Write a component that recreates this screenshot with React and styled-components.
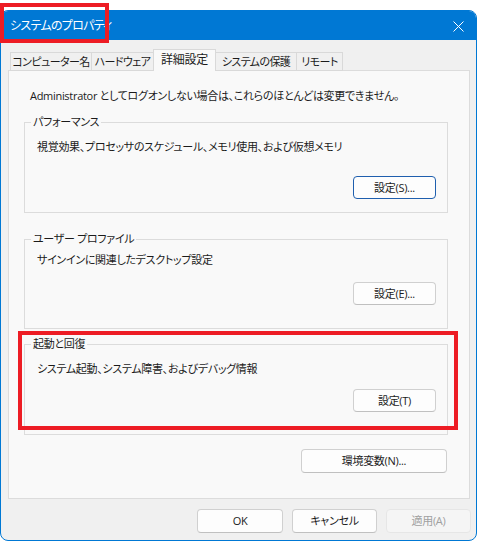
import styled, { createGlobalStyle } from "styled-components";

const GlobalStyle = createGlobalStyle`
  body {
    margin: 0;
    background: #ffffff;
    font-family: "Open Sans", "Noto Sans CJK JP", sans-serif;
    font-feature-settings: "palt";
    font-size: 11px;
    letter-spacing: -0.3px;
    line-height: 16px;
    color: #1b1b1b;
  }
  * { box-sizing: border-box; }
`;

const Page = styled.div`
  position: relative;
  width: 479px;
  height: 543px;
  padding-top: 10px;
`;

const Window = styled.div`
  width: 477px;
  height: 531px;
  border: 1px solid #0078d4;
  border-radius: 8px;
  background: #f0f0f0;
  overflow: hidden;
  display: flex;
  flex-direction: column;
`;

const TitleBar = styled.div`
  height: 29px;
  flex: none;
  background: #0078d4;
  color: #ffffff;
  font-size: 12px;
  letter-spacing: -0.7px;
  display: flex;
  align-items: center;
  justify-content: space-between;
  padding: 1px 12px 0 9px;
`;

const CloseIcon = () => (
  <svg width="11" height="11" viewBox="0 0 11 11">
    <path d="M0.5 0.5 L10.5 10.5 M10.5 0.5 L0.5 10.5" stroke="#ffffff" strokeWidth="1" fill="none" />
  </svg>
);

const TabStrip = styled.div`
  display: flex;
  align-items: flex-end;
  height: 22px;
  margin: 9px 0 -1px 9px;
  position: relative;
  z-index: 1;
`;

const Tab = styled.div`
  flex: none;
  width: ${(p) => p.$w}px;
  height: ${(p) => (p.$active ? 22 : 19)}px;
  margin-left: -1px;
  border: 1px solid #d9d9d9;
  border-bottom: ${(p) => (p.$active ? "none" : "1px solid #d9d9d9")};
  background: ${(p) => (p.$active ? "#f9f9f9" : "#f0f0f0")};
  position: relative;
  z-index: ${(p) => (p.$active ? 2 : 1)};
  display: flex;
  align-items: center;
  justify-content: center;
  padding-bottom: ${(p) => (p.$active ? 2 : 0)}px;
  font-size: ${(p) => (p.$active ? 12 : 11)}px;
  letter-spacing: ${(p) => (p.$active ? -0.3 : -0.6)}px;
  white-space: nowrap;
  &:first-child { margin-left: 0; }
`;

const Panel = styled.div`
  margin: 0 6px 0 7px;
  height: 429px;
  border: 1px solid #dcdcdc;
  background: #f9f9f9;
  padding: 17px 0 0 0;
  display: flex;
  flex-direction: column;
`;

const Intro = styled.div`
  padding-left: 21px;
  white-space: nowrap;
`;

const GroupBox = styled.fieldset`
  margin: ${(p) => p.$mt}px 21px 0 15px;
  padding: 0 11px ${(p) => p.$pb}px 12px;
  border: 1px solid #dcdcdc;
  min-width: 0;
  display: flex;
  flex-direction: column;
`;

const Legend = styled.legend`
  padding: 0 2px;
  margin-left: -6px;
  line-height: 16px;
`;

const Desc = styled.div`
  margin-top: ${(p) => p.$mt}px;
  white-space: nowrap;
`;

const Button = styled.button`
  font: inherit;
  letter-spacing: inherit;
  font-feature-settings: "palt";
  width: ${(p) => p.$w}px;
  height: ${(p) => p.$h || 23}px;
  margin-top: ${(p) => p.$mt || 0}px;
  align-self: flex-end;
  background: ${(p) => (p.disabled ? "#f5f5f5" : "#fdfdfd")};
  color: ${(p) => (p.disabled ? "#a0a0a0" : "#1b1b1b")};
  border: 1px solid ${(p) => (p.$focus ? "#1f5fae" : p.disabled ? "#e6e6e6" : "#d0d0d0")};
  border-bottom-color: ${(p) => (p.$focus ? "#1f5fae" : p.disabled ? "#e6e6e6" : "#c0c0c0")};
  border-radius: 4px;
  padding: 0;
  display: flex;
  align-items: center;
  justify-content: center;
`;

const EnvRow = styled.div`
  display: flex;
  justify-content: flex-end;
  margin: 14px 22px 0 0;
`;

const Footer = styled.div`
  display: flex;
  justify-content: flex-end;
  gap: 9px;
  margin: 10px 5px 0 0;
`;

const Highlight = styled.div`
  position: absolute;
  left: ${(p) => p.$x}px;
  top: ${(p) => p.$y}px;
  width: ${(p) => p.$w}px;
  height: ${(p) => p.$h}px;
  border: 4px solid #ed1c24;
  pointer-events: none;
`;

const tabs = [
  { label: "コンピューター名", w: 82 },
  { label: "ハードウェア", w: 63 },
  { label: "詳細設定", w: 63, active: true },
  { label: "システムの保護", w: 82 },
  { label: "リモート", w: 47 },
];

export default function App() {
  return (
    <Page>
      <GlobalStyle />
      <Window>
        <TitleBar>
          <span>システムのプロパティ</span>
          <CloseIcon />
        </TitleBar>
        <TabStrip>
          {tabs.map((t) => (
            <Tab key={t.label} $w={t.w} $active={t.active}>
              {t.label}
            </Tab>
          ))}
        </TabStrip>
        <Panel>
          <Intro>Administrator としてログオンしない場合は、これらのほとんどは変更できません。</Intro>

          <GroupBox $mt={10} $pb={13}>
            <Legend>パフォーマンス</Legend>
            <Desc $mt={9}>視覚効果、プロセッサのスケジュール、メモリ使用、および仮想メモリ</Desc>
            <Button $w={83} $mt={21} $focus>設定(S)...</Button>
          </GroupBox>

          <GroupBox $mt={18} $pb={23}>
            <Legend>ユーザー プロファイル</Legend>
            <Desc $mt={5}>サインインに関連したデスクトップ設定</Desc>
            <Button $w={83} $mt={14}>設定(E)...</Button>
          </GroupBox>

          <GroupBox $mt={7} $pb={22}>
            <Legend>起動と回復</Legend>
            <Desc $mt={9}>システム起動、システム障害、およびデバッグ情報</Desc>
            <Button $w={83} $mt={12}>設定(T)</Button>
          </GroupBox>

          <EnvRow>
            <Button $w={146} $h={24}>環境変数(N)...</Button>
          </EnvRow>
        </Panel>
        <Footer>
          <Button $w={86} $h={24}>OK</Button>
          <Button $w={85} $h={24}>キャンセル</Button>
          <Button $w={85} $h={24} disabled>適用(A)</Button>
        </Footer>
      </Window>
      <Highlight $x={0} $y={3} $w={109} $h={40} />
      <Highlight $x={18} $y={331} $w={440} $h={99} />
    </Page>
  );
}
